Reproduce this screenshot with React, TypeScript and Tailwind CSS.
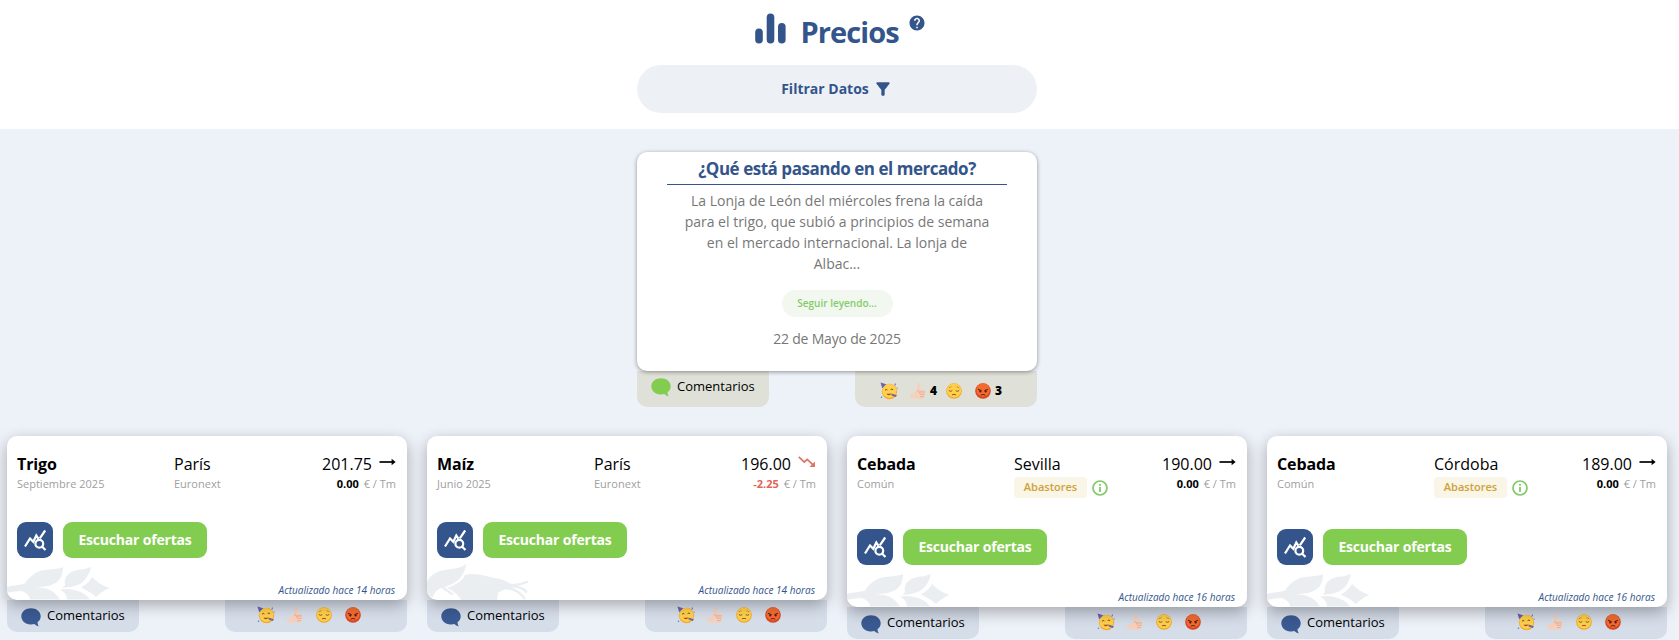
import React from "react";
import { MdFilterAlt, MdHelp } from "react-icons/md";

function BarsIcon() {
  return (
    <svg width="31" height="31" viewBox="0 0 31 31" fill="#33558b">
      <rect x="0.2" y="15.5" width="7.6" height="15" rx="3.8" />
      <rect x="11.7" y="0.5" width="7.6" height="30" rx="3.8" />
      <rect x="23" y="10" width="7.6" height="20.5" rx="3.8" />
    </svg>
  );
}

function QueryIcon() {
  return (
    <svg width="24" height="24" viewBox="0 0 24 24" fill="none" stroke="#fff" strokeWidth="2.2">
      <path d="M2 18.500 7 10.500 10.300 13.800 13.300 7.500 15.500 10.800M16.800 10.300 22.200 2.500" />
      <circle cx="16.300" cy="15.800" r="3.900" />
      <path d="M19 18.500 22.500 22" />
    </svg>
  );
}

function InfoIcon() {
  return (
    <svg width="16" height="16" viewBox="0 0 16 16" fill="none" stroke="#82ca68">
      <circle cx="8" cy="8" r="7" strokeWidth="1.700" />
      <path d="M8 7V12M8 4V5.700" strokeWidth="1.800" />
    </svg>
  );
}

function Bubble({ color }: { color: string }) {
  return (
    <svg width="20" height="19" viewBox="0 0 20 19" fill={color}>
      <path d="M10 0.3C4.600.3.300 3.800.300 8.200.300 12.600 4.200 16.300 9.500 16.400 11 16.500 12.200 16.300 13.300 16 14.500 17.200 16 18 17.800 18.500 17 17.300 16.600 15.600 16.500 14.200 18.500 12.700 19.700 10.700 19.700 8.200 19.700 3.800 15.400.300 10 .300Z" />
    </svg>
  );
}

function Party() {
  return (
    <svg width="18" height="18" viewBox="0 0 18 18">
      <circle cx="9.500" cy="9.500" r="7.700" fill="#f6a92c" />
      <circle cx="9.400" cy="8.900" r="7" fill="#ffd04c" />
      <path d="M.5.600 6.200 2.300 2.200 6.300Z" fill="#6f5fb0" />
      <path d="M5 8.300q1.200-1.600 2.400-.3M10.600 7.700q1.300-1.500 2.500.1" stroke="#7a4c20" strokeWidth="1" fill="none" />
      <path d="M6.500 11.500q2.500.6 4.600-.3-.2 2-2.200 2T6.500 11.500Z" fill="#a8451f" />
      <path d="M11.300 11.600 16.800 13.200l-.9 1.800-4.300-1.500Z" fill="#6b64a0" />
      <path d="M15.200 1.500q.6 1.300-.6 2" stroke="#8b62c6" strokeWidth="1.100" fill="none" />
      <circle cx="1.500" cy="15.300" r=".8" fill="#4d86c9" />
      <circle cx="17.200" cy="6" r=".6" fill="#8b62c6" />
    </svg>
  );
}

function Thumb() {
  return (
    <svg width="18" height="18" viewBox="0 0 18 18">
      <path d="M1.200 12.800C4.500 12 7.200 9.500 8 6.500L8.300 2C8.500.5 10.900.5 11 2.200L11.300 7.500H14.600C16.400 7.500 16.800 9.200 15.800 10 16.900 10.600 16.700 12 15.800 12.500 16.400 13.300 16.100 14.400 15.100 14.800 15.300 16 14.600 16.800 13.200 16.800H8.500C6.500 16.800 5 16 1.200 16.200Z" fill="#f6d0bd" />
      <path d="M11 9.900h4.700M11 12.300h4.600M11 14.700h3.900M8.200 8.600q2.800.2 2.600 3" stroke="#dba88f" strokeWidth=".8" fill="none" />
    </svg>
  );
}

function Pensive() {
  return (
    <svg width="18" height="18" viewBox="0 0 18 18">
      <circle cx="9" cy="9" r="7.800" fill="#f3a62b" />
      <circle cx="9" cy="8.500" r="7.100" fill="#ffd04c" />
      <path d="M3.800 8.500q1.800 1.500 3.500.2M10.700 8.700q1.800 1.300 3.500-.2" stroke="#8a5a22" strokeWidth="1" fill="none" />
      <path d="M3.800 5.900 6.500 4.600M14.200 5.900 11.500 4.600" stroke="#b1762b" strokeWidth=".7" />
      <path d="M6.900 12.900q2.100-1.200 4.200 0" stroke="#8a5a22" strokeWidth="1" fill="none" />
    </svg>
  );
}

function Angry() {
  return (
    <svg width="18" height="18" viewBox="0 0 18 18">
      <circle cx="9" cy="9" r="7.800" fill="#d8451f" />
      <circle cx="9" cy="8" r="6.700" fill="#f26c30" />
      <path d="M4 7.300 7.600 8.800M14 7.300l-3.600 1.500" stroke="#6a1d15" strokeWidth="1.100" />
      <circle cx="6.300" cy="9.500" r="1.100" fill="#4c1a19" />
      <circle cx="11.700" cy="9.500" r="1.100" fill="#4c1a19" />
      <path d="M6.700 13.200q2.300-1.500 4.600 0" stroke="#6a1d15" strokeWidth="1" fill="none" />
    </svg>
  );
}

function FlatArrow() {
  return (
    <svg width="17" height="12" viewBox="0 0 17 12">
      <path d="M.5 6H13.500" stroke="#000" strokeWidth="1.700" />
      <path d="M12.600 2.800 16.600 6 12.600 9.200Z" fill="#000" />
    </svg>
  );
}

function DownArrow() {
  return (
    <svg width="18" height="12" viewBox="0 0 18 12">
      <path d="M.8.800 6.300 6 9.300 3.300 15.500 9.300" stroke="#dc7565" strokeWidth="1.700" fill="none" />
      <path d="M17 5.500V11h-5.500Z" fill="#dc7565" />
    </svg>
  );
}

function Wheat() {
  return (
    <svg width="103" height="34" viewBox="0 0 103 34" fill="#ebeef1">
      <path d="M0 21C7 19 14 19 18 17.500 22 11 29 5 38 4 45 3 52 3 56 1 56 10 53 16 44 19 38 21 32 21 29 21.500 40 21 48 25 53 33.500H23C23 30 19 26 14 25 9 25 3 27 0 26.500Z" />
      <path d="M58 19C56 8 67 3.500 74 3.500 78 3.300 81 2 84 1 82 9 79 14 73 18 67 21 61 21.500 55 22Q57 21 58 19ZM53 23.500C67 21 79 27 83 33.500H60C60 29 57 26 53 23.500ZM74 21.500C79 19 83 15 85 11 90 16 96 20 102.500 22 97 24 92 28 89 31 85 27 79 24 74 21.500Z" />
    </svg>
  );
}

function Corn() {
  return (
    <svg width="103" height="36" viewBox="0 0 103 36">
      <path d="M0 18C3 11 10 7 20 5.500 28 4.500 34 4 39 0 38 8 34 15 27 19 23 21 19 22.500 18 23.500L27 30 24 32 14 24.500Q9 27 6 34L0 30Z" fill="#ebeef1" />
      <path d="M38 11C50 8 60 13 68 14 77 15 79 18 84 19.500V25L77 25.500 71 29 70 36H34C31 31 28 28 20 23.800 29 21 35 17 38 11Z" fill="#ebeef1" />
      <path d="M80 20.500Q90 22.500 101 17.500M80 22.500Q94 21 100 28.500M79 24Q91 25 98 35" stroke="#ebeef1" strokeWidth="2.300" fill="none" />
      <path d="M6 35Q8 27 14 25L27 34" stroke="#fff" strokeWidth="1.600" fill="none" />
    </svg>
  );
}

function Reactions({ counts }: { counts?: [string, string] }) {
  return (
    <>
      <span className="flex w-[29px] shrink-0"><Party /></span>
      <span className={`flex shrink-0 items-center gap-[3px] ${counts ? "w-9" : "w-[29px]"}`}><Thumb />{counts && <b className="font-extrabold">{counts[0]}</b>}</span>
      <span className="flex w-[29px] shrink-0"><Pensive /></span>
      <span className="flex w-[29px] shrink-0 items-center gap-[3px]"><Angry />{counts && <b className="font-extrabold">{counts[1]}</b>}</span>
    </>
  );
}

type Price = {
  name: string;
  sub: string;
  place: string;
  badge?: boolean;
  price: string;
  diff: string;
  down?: boolean;
  hours: number;
  corn?: boolean;
};

const prices: Price[] = [
  { name: "Trigo", sub: "Septiembre 2025", place: "París", price: "201.75", diff: "0.00", hours: 14 },
  { name: "Maíz", sub: "Junio 2025", place: "París", price: "196.00", diff: "-2.25", down: true, hours: 14, corn: true },
  { name: "Cebada", sub: "Común", place: "Sevilla", badge: true, price: "190.00", diff: "0.00", hours: 16 },
  { name: "Cebada", sub: "Común", place: "Córdoba", badge: true, price: "189.00", diff: "0.00", hours: 16 },
];

function PriceCard({ p }: { p: Price }) {
  return (
    <article className="w-[400px] shrink-0">
      <div className={`relative z-10 flex flex-col rounded-[10px] bg-white px-[10px] pt-[18px] shadow-[0_5px_15px_rgba(0,0,0,0.3)] ${p.badge ? "h-[171px]" : "h-[164px]"}`}>
        <div className="flex">
          <div className="w-[157px]">
            <div className="text-base leading-5 font-bold tracking-[-0.1px]">{p.name}</div>
            <div className="text-[11px] leading-5 text-[#a0a0a0]">{p.sub}</div>
          </div>
          <div className="flex-1">
            <div className="text-base leading-5">{p.place}</div>
            {p.badge ? (
              <div className="mt-[3px] flex items-center gap-[5px]">
                <span className="flex h-[21px] w-[73px] items-center justify-center rounded-[4px] bg-[#f9f5e7] text-[11px] font-semibold text-[#cfa238]">Abastores</span>
                <InfoIcon />
              </div>
            ) : (
              <div className="text-[11px] leading-5 text-[#a0a0a0]">Euronext</div>
            )}
          </div>
          <div className="flex flex-col items-end">
            <div className="flex h-5 items-center gap-[7px] pr-px text-base leading-5 font-medium">
              {p.price}
              <span className="mb-1">{p.down ? <DownArrow /> : <FlatArrow />}</span>
            </div>
            <div className="pr-px text-[11px] leading-5 text-[#a0a0a0]">
              <b className={p.down ? "mr-[5px] text-[#e36459]" : "mr-[5px] text-black"}>{p.diff}</b>€ / Tm
            </div>
          </div>
        </div>
        <div className="mt-auto mb-[42px] flex gap-[10px]">
          <span className="flex h-9 w-9 items-center justify-center rounded-[9px] bg-[#33558b]"><QueryIcon /></span>
          <span className="flex h-9 w-36 items-center justify-center rounded-[9px] bg-[#82cc50] text-sm font-bold tracking-[-0.2px] text-white">Escuchar ofertas</span>
        </div>
        <div className="absolute bottom-0 left-0 overflow-hidden rounded-bl-[10px]">{p.corn ? <Corn /> : <Wheat />}</div>
        <div className="absolute right-3 bottom-[3px] text-[10px] leading-[14px] text-[#33558b] italic">Actualizado hace {p.hours} horas</div>
      </div>
      <div className="flex h-8 justify-between">
        <div className="flex w-[132px] gap-[6px] rounded-b-[10px] bg-[#d5dde9] pt-[8px] pl-[14px] text-[13px] leading-4">
          <Bubble color="#3a5a92" /><span className="-mt-px">Comentarios</span>
        </div>
        <div className="flex h-8 w-[182px] items-start rounded-b-[10px] bg-[#d5dde9] pt-[6px] pl-8"><Reactions /></div>
      </div>
    </article>
  );
}

export default function App() {
  return (
    <main className="h-[640px] overflow-hidden bg-[#edf1f8] font-['Open_Sans','Noto_Sans',sans-serif] text-black">
      <header className="flex h-[129px] flex-col items-center bg-white pr-[5px]">
        <div className="flex h-[65px] w-[171px] translate-x-[3px] pt-[13px]">
          <BarsIcon />
          <h1 className="ml-[15px] text-[29px] leading-[38px] font-bold tracking-[-0.9px] text-[#33558b]">Precios</h1>
          <MdHelp className="mt-[1px] ml-auto" size={18} color="#33558b" />
        </div>
        <div className="flex h-12 w-[400px] items-center justify-center gap-[4px] rounded-full bg-[#edf1f6] text-sm font-bold text-[#33558b]">
          Filtrar Datos <MdFilterAlt size={20} />
        </div>
      </header>
      <section className="ml-[637px] w-[400px] pt-[23px]">
        <div className="relative z-10 flex h-[219px] flex-col items-center rounded-[10px] bg-white shadow-[0_1px_4px_rgba(0,0,0,0.4)]">
          <h2 className="flex h-[33px] w-[340px] items-center justify-center border-b border-[#33558b] pt-px text-[17px] font-bold tracking-[-0.47px] text-[#33558b]">¿Qué está pasando en el mercado?</h2>
          <p className="mt-[5px] w-[310px] text-center text-sm leading-[21px] text-[#777]">La Lonja de León del miércoles frena la caída para el trigo, que subió a principios de semana en el mercado internacional. La lonja de Albac...</p>
          <span className="mt-4 flex h-[27px] w-[111px] items-center justify-center rounded-full bg-[#f2f8f0] text-[10px] font-semibold text-[#82cc68]">Seguir leyendo...</span>
          <p className="mt-[11px] text-sm leading-[21px] tracking-[-0.2px] text-[#777]">22 de Mayo de 2025</p>
        </div>
        <div className="flex h-9 justify-between">
          <div className="flex w-[132px] gap-[6px] rounded-b-[10px] bg-[#dfe1d8] pt-[7px] pl-[14px] text-[13px] leading-4"><Bubble color="#82cc50" />Comentarios</div>
          <div className="flex w-[182px] items-start rounded-b-[10px] bg-[#dfe1d8] pt-[11px] pl-[25px] text-[12px] leading-[18px]"><Reactions counts={["4", "3"]} /></div>
        </div>
      </section>
      <section className="mt-[29px] flex gap-5 pl-[7px]">
        {prices.map((p) => <PriceCard key={p.place + p.name} p={p} />)}
      </section>
    </main>
  );
}
